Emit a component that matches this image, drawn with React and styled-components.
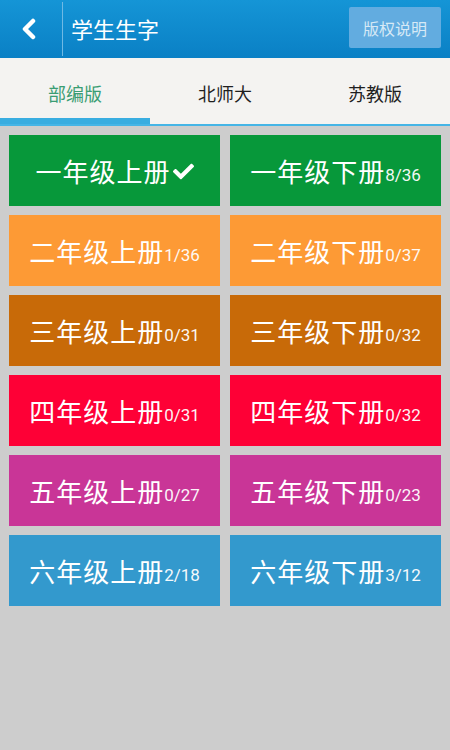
import React from 'react'
import styled, { createGlobalStyle } from 'styled-components'
import { FaCheck } from 'react-icons/fa'

const GlobalStyle = createGlobalStyle`
  html, body {
    margin: 0;
    padding: 0;
    background: #cdcdcd;
  }
  body {
    font-family: Roboto, "Noto Sans CJK SC", sans-serif;
  }
`

const books = [
  { name: '一年级上册', done: true, color: '#07983a' },
  { name: '一年级下册', count: '8/36', color: '#07983a' },
  { name: '二年级上册', count: '1/36', color: '#fd9a35' },
  { name: '二年级下册', count: '0/37', color: '#fd9a35' },
  { name: '三年级上册', count: '0/31', color: '#c86a08' },
  { name: '三年级下册', count: '0/32', color: '#c86a08' },
  { name: '四年级上册', count: '0/31', color: '#fe0036' },
  { name: '四年级下册', count: '0/32', color: '#fe0036' },
  { name: '五年级上册', count: '0/27', color: '#c93597' },
  { name: '五年级下册', count: '0/23', color: '#c93597' },
  { name: '六年级上册', count: '2/18', color: '#3399cd' },
  { name: '六年级下册', count: '3/12', color: '#3399cd' },
]

const tabs = ['部编版', '北师大', '苏教版']

export default function App() {
  return (
    <>
      <GlobalStyle />
      <Page>
        <Header>
          <BackButton>
            <svg width="18" height="22" viewBox="0 0 18 22">
              <path d="M13 3 L5 11 L13 19" fill="none" stroke="#fff" strokeWidth="4.5" strokeLinecap="round" strokeLinejoin="round" />
            </svg>
          </BackButton>
          <Divider />
          <Title>学生生字</Title>
          <CopyrightButton>版权说明</CopyrightButton>
        </Header>
        <TabBar>
          {tabs.map((t, i) => (
            <Tab key={t} $active={i === 0}>{t}</Tab>
          ))}
        </TabBar>
        <Grid>
          {books.map((b) => (
            <Card key={b.name} $bg={b.color}>
              <CardName>{b.name}</CardName>
              {b.done ? (
                <CheckMark><FaCheck /></CheckMark>
              ) : (
                <Count>{b.count}</Count>
              )}
            </Card>
          ))}
        </Grid>
      </Page>
    </>
  )
}

const Page = styled.div`
  width: 450px;
  min-height: 750px;
  background: #cdcdcd;
`

const Header = styled.div`
  height: 58px;
  display: flex;
  align-items: center;
  background: linear-gradient(#1595d6, #0a80c5);
  padding-right: 9px;
`

const BackButton = styled.div`
  width: 62px;
  display: flex;
  justify-content: center;
  align-items: center;
  padding-right: 4px;
  box-sizing: border-box;
`

const Divider = styled.div`
  width: 1px;
  height: 54px;
  background: #6fb9e4;
`

const Title = styled.div`
  flex: 1;
  margin-left: 8px;
  margin-bottom: 3px;
  color: #fff;
  font-size: 22px;
  font-family: "Noto Sans CJK SC", sans-serif;
`

const CopyrightButton = styled.div`
  width: 92px;
  height: 41px;
  margin-bottom: 3px;
  display: flex;
  align-items: center;
  justify-content: center;
  background: #62ace0;
  border-radius: 2px;
  color: #d6e9f6;
  font-size: 16px;
  font-family: "Noto Sans CJK SC", sans-serif;
`

const TabBar = styled.div`
  display: flex;
  height: 66px;
  background: #f4f3f1;
  border-bottom: 2px solid #45b5e6;
`

const Tab = styled.div`
  flex: 1;
  display: flex;
  align-items: center;
  justify-content: center;
  padding-top: 10px;
  box-sizing: border-box;
  font-size: 18px;
  font-family: "Noto Sans CJK SC", sans-serif;
  color: ${(p) => (p.$active ? '#3a9d73' : '#1f1f1f')};
  border-bottom: 6px solid ${(p) => (p.$active ? '#39ade0' : 'transparent')};
`

const Grid = styled.div`
  display: grid;
  grid-template-columns: 1fr 1fr;
  gap: 9px 10px;
  padding: 9px 9px;
`

const Card = styled.div`
  height: 71px;
  display: flex;
  align-items: center;
  justify-content: center;
  background: ${(p) => p.$bg};
  color: #fff;
`

const CardName = styled.span`
  font-size: 26px;
  font-family: "Noto Sans CJK SC", sans-serif;
  letter-spacing: 1px;
`

const Count = styled.span`
  font-size: 17px;
  font-family: Roboto, sans-serif;
  margin-top: 8px;
  opacity: 0.95;
`

const CheckMark = styled.span`
  display: flex;
  font-size: 21px;
  margin-left: 2px;
  margin-top: 2px;
`
